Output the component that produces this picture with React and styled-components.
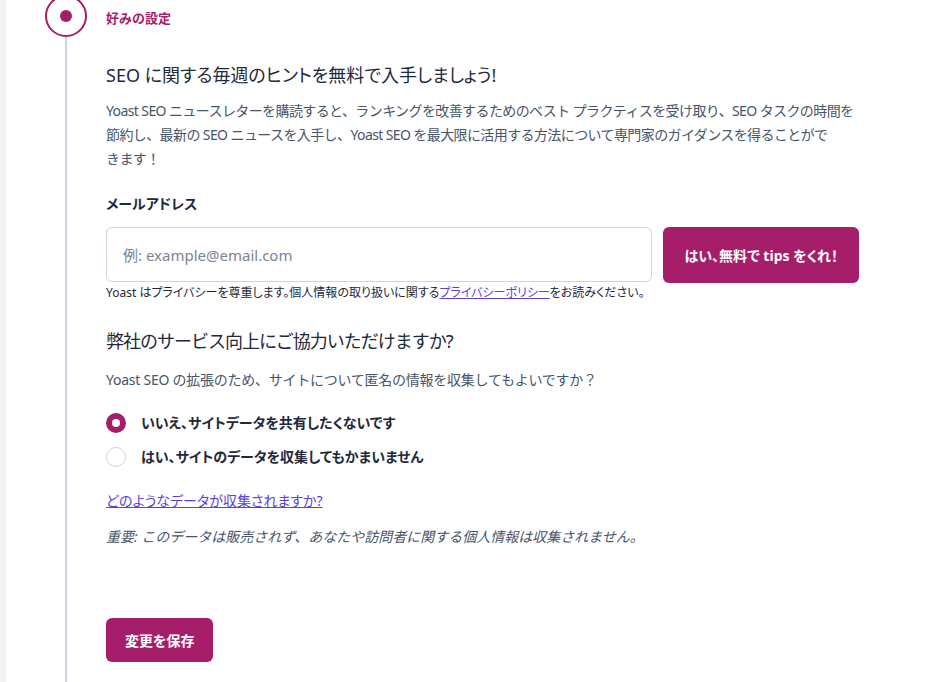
import React, { useState } from "react";
import styled, { createGlobalStyle } from "styled-components";

const GlobalStyle = createGlobalStyle`
  body {
    margin: 0;
    background: #ffffff;
    font-family: "Noto Sans", "Noto Sans CJK JP", sans-serif;
    color: #1e293b;
  }
`;

const Page = styled.div`
  display: flex;
  min-height: 682px;
  overflow: hidden;
`;

const SideStrip = styled.div`
  width: 6px;
  flex-shrink: 0;
  background: #f0f2f6;
`;

const Step = styled.div`
  display: flex;
  flex: 1;
`;

const Rail = styled.div`
  width: 61px;
  padding-left: 39px;
  flex-shrink: 0;
  display: flex;
  flex-direction: column;
`;

const StepCircle = styled.div`
  width: 38px;
  height: 38px;
  margin-top: -5px;
  border: 2px solid #a61e69;
  border-radius: 50%;
  display: flex;
  align-items: center;
  justify-content: center;
  flex-shrink: 0;
  &::after {
    content: "";
    width: 12px;
    height: 12px;
    border-radius: 50%;
    background: #a61e69;
  }
`;

const RailLine = styled.div`
  flex: 1;
  width: 2px;
  margin-left: 20px;
  background: #cbd5e1;
`;

const Content = styled.div`
  width: 753px;
  padding-top: 8px;
`;

const StepTitle = styled.div`
  font-size: 13px;
  line-height: 20px;
  font-weight: 600;
  color: #a61e69;
`;

const Heading = styled.h2`
  margin: ${(p) => p.$top} 0 0;
  font-size: 18px;
  line-height: 28px;
  font-weight: 400;
  color: #1e293b;
  font-feature-settings: ${(p) => (p.$palt ? '"palt"' : "normal")};
  letter-spacing: ${(p) => p.$spacing || "0"};
`;

const Text = styled.p`
  margin: ${(p) => p.$top} 0 0;
  font-size: 14px;
  line-height: 24px;
  color: #475569;
  font-style: ${(p) => (p.$italic ? "italic" : "normal")};
  letter-spacing: ${(p) => p.$spacing || "0"};
`;

const Label = styled.label`
  display: block;
  margin-top: 22px;
  font-size: 14px;
  line-height: 22px;
  font-weight: 600;
  font-feature-settings: "palt";
  color: #1e293b;
`;

const EmailRow = styled.div`
  display: flex;
  gap: 11px;
  margin-top: 12px;
  align-items: flex-start;
`;

const Field = styled.div`
  flex: 1;
`;

const Input = styled.input`
  box-sizing: border-box;
  width: 100%;
  height: 55px;
  padding: 0 16px;
  border: 1px solid #cbd5e1;
  border-radius: 6px;
  font-family: inherit;
  font-size: 15px;
  color: #1e293b;
  outline: none;
  &::placeholder {
    color: #7a8494;
  }
`;

const Hint = styled.div`
  margin-top: 1px;
  font-size: 12px;
  line-height: 20px;
  font-feature-settings: "palt";
  color: #1e293b;
  white-space: nowrap;
`;

const Link = styled.a`
  color: #5b3fe0;
  text-decoration: underline;
`;

const Button = styled.button`
  height: ${(p) => p.$height};
  padding: 0 ${(p) => p.$pad};
  border: none;
  border-radius: 6px;
  background: #a61e69;
  color: #ffffff;
  font-family: inherit;
  font-feature-settings: "palt";
  font-size: 14px;
  font-weight: 700;
  white-space: nowrap;
  cursor: pointer;
`;

const RadioList = styled.div`
  display: flex;
  flex-direction: column;
  gap: 12px;
  margin-top: 20px;
`;

const RadioRow = styled.label`
  display: flex;
  align-items: center;
  gap: 15px;
  font-size: 14px;
  line-height: 22px;
  font-weight: 600;
  font-feature-settings: "palt";
  color: #1e293b;
  cursor: pointer;
`;

const RadioDot = styled.span`
  box-sizing: border-box;
  width: 20px;
  height: 20px;
  border-radius: 50%;
  flex-shrink: 0;
  border: ${(p) => (p.$on ? "6px solid #a61e69" : "1px solid #cbd5e1")};
  background: #ffffff;
`;

const LinkLine = styled.div`
  margin-top: 22px;
  font-size: 14px;
  line-height: 22px;
  font-feature-settings: "palt";
`;

const Footer = styled.div`
  margin-top: 69px;
`;

const options = [
  { id: "no", label: "いいえ、サイトデータを共有したくないです" },
  { id: "yes", label: "はい、サイトのデータを収集してもかまいません" },
];

export default function App() {
  const [choice, setChoice] = useState("no");

  return (
    <Page>
      <GlobalStyle />
      <SideStrip />
      <Step>
        <Rail>
          <StepCircle />
          <RailLine />
        </Rail>
        <Content>
          <StepTitle>好みの設定</StepTitle>
          <Heading $top="33px" $palt>
            SEO に関する毎週のヒントを無料で入手しましょう!
          </Heading>
          <Text $top="10px" $spacing="-0.6px">
            Yoast SEO ニュースレターを購読すると、ランキングを改善するためのベスト プラクティスを受け取り、SEO タスクの時間を
            <br />
            節約し、最新の SEO ニュースを入手し、Yoast SEO を最大限に活用する方法について専門家のガイダンスを得ることがで
            <br />
            きます！
          </Text>
          <Label htmlFor="email">メールアドレス</Label>
          <EmailRow>
            <Field>
              <Input id="email" type="email" placeholder="例: example@email.com" />
              <Hint>
                Yoast はプライバシーを尊重します。個人情報の取り扱いに関する
                <Link href="#">プライバシーポリシー</Link>
                をお読みください。
              </Hint>
            </Field>
            <Button $height="56px" $pad="21px">
              はい、無料で tips をくれ！
            </Button>
          </EmailRow>
          <Heading $top="24px" $spacing="-1px">
            弊社のサービス向上にご協力いただけますか?
          </Heading>
          <Text $top="13px" $spacing="-0.25px">
            Yoast SEO の拡張のため、サイトについて匿名の情報を収集してもよいですか？
          </Text>
          <RadioList>
            {options.map((o) => (
              <RadioRow key={o.id} onClick={() => setChoice(o.id)}>
                <RadioDot $on={choice === o.id} />
                {o.label}
              </RadioRow>
            ))}
          </RadioList>
          <LinkLine>
            <Link href="#">どのようなデータが収集されますか?</Link>
          </LinkLine>
          <Text $top="13px" $italic>
            重要: このデータは販売されず、あなたや訪問者に関する個人情報は収集されません。
          </Text>
          <Footer>
            <Button $height="44px" $pad="19px">
              変更を保存
            </Button>
          </Footer>
        </Content>
      </Step>
    </Page>
  );
}
